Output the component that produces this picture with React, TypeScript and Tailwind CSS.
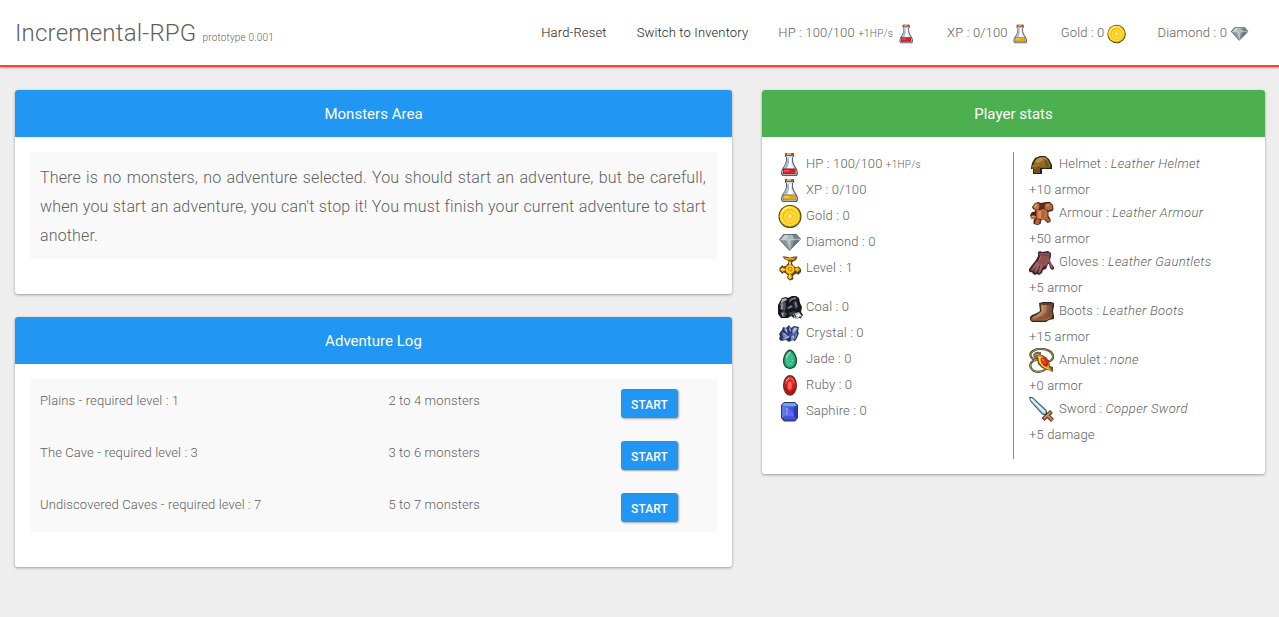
import type { ReactNode } from "react";

type IconProps = { className?: string };

function Svg({ className = "size-[25px]", children }: { className?: string; children: ReactNode }) {
  return (
    <svg viewBox="0 0 25 25" className={`${className} shrink-0`} aria-hidden="true">
      {children}
    </svg>
  );
}

function Flask({ className, dark, base, light }: IconProps & { dark: string; base: string; light: string }) {
  return (
    <Svg className={className}>
      <path d="M7 1h9v4h-1v4l1 3 1 2 2 3 1 3v2l-1 2H4.500L3 22v-2l1-3 2-3 1-2 1-3V5H7z" fill="#5f5f63" />
      <path d="M9 5h5v5l1 2.500 1.500 3 1.500 2 .7 3-1 2H5l-1-1.500.7-3 1.500-2.500 1.500-3L9 10z" fill="#dfe7f4" />
      <path d="M9.500 6h1.500v5l-2 6H6l2-4.500z" fill="#a5badf" />
      <path d="M11 6h2v6l1 4H9.500l1.500-4z" fill="#fff" />
      <path d="M5 16.500h12.500l.5 3v3H4.500v-3z" fill={dark} />
      <path d="M5.500 17.500H17v4H5.500z" fill={base} />
      <path d="M6 18h5v1.500H6z" fill={light} />
      <path d="M3.800 19.500l1.200-1v3.700h12.500v-3.700l1 1v2.500l-1 1H5z" fill="#b9bec8" />
      <path d="M8 1h7v3H8z" fill="#98592e" />
      <path d="M9 1h4v2H9z" fill="#e3ad6c" />
      <path d="M8 4h7v1H8z" fill="#cdd8eb" />
    </Svg>
  );
}

const HpFlask = (p: IconProps) => <Flask {...p} dark="#a3151b" base="#df2027" light="#fa5355" />;
const XpFlask = (p: IconProps) => <Flask {...p} dark="#a97f17" base="#dfae22" light="#f7ce4c" />;

function Coin({ className }: IconProps) {
  return (
    <Svg className={className}>
      <circle cx="12" cy="12.500" r="11.500" fill="#4e4216" />
      <circle cx="12" cy="12.500" r="10.500" fill="#deaa0a" />
      <circle cx="11.600" cy="12" r="9.900" fill="#ffe038" />
      <circle cx="12" cy="12.500" r="7.400" fill="#e8b715" />
      <circle cx="12.300" cy="12.800" r="6.700" fill="#ffd633" />
      <path d="M12 8.500l4 4-4 4-4-4z" fill="#f0c022" />
      <path d="M12 10l2.500 2.500L12 15l-2.500-2.500z" fill="#fff08a" />
      <path d="M4 8Q6.500 3.500 11.500 3.300" fill="none" stroke="#fff9b0" />
    </Svg>
  );
}

function Diamond({ className }: IconProps) {
  return (
    <Svg className={className}>
      <path d="M5.500 4h13l4.500 5-11.500 12L1 9.500z" fill="#616c6e" />
      <path d="M6.500 5h11.500l4 4.500-10 10.500L2.500 9.500z" fill="#98a6a8" />
      <path d="M6.500 5h4L8.500 9.500H3z" fill="#c9d1d2" />
      <path d="M10.500 5h4l2 4.500h-8z" fill="#adb9bb" />
      <path d="M14.500 5h3.500l3.500 4.500h-5z" fill="#758284" />
      <path d="M3 10h5.500l3 9z" fill="#8a999c" />
      <path d="M8.500 10h5l-1.500 10z" fill="#b5c1c2" />
      <path d="M13.500 10h3l-4.500 10z" fill="#849497" />
      <path d="M16.500 10h5.500l-9 9z" fill="#606f73" />
      <path d="M2.500 9.700h19.500" stroke="#d4dada" strokeWidth=".7" />
    </Svg>
  );
}

function LevelBadge() {
  return (
    <Svg>
      <path d="M4.500.5h3l4.500 1 4.500-1h3l-1.500 3.500-3 1.500-1 1 .5 2 2.500 2.500 2 .5 1-1.500 3 3v3l-3 3-1-1.500-2 .5-2.500 2.500 1 1-.5 2L12 24.500 9.500 22.500l-.5-2 1-1-2.500-2.500-2-.5-1 1.500-3-3v-3l3-3 1 1.500 2-.5 2.500-2.500.5-2-1-1-3-1.500z" fill="#5d3d12" />
      <path d="M6 1l3 1 3-.5 3 .5 3-1-2 2.500-4 1-4-1z" fill="#f3ab18" />
      <path d="M9.500 3.500h5l-1 1h-3z" fill="#a65d15" />
      <path d="M11 5.500h2v4h-2zM2 13.500L4.300 11.300l3 1.500v1.500L4.300 16zM22 13.500L19.700 11.300l-3 1.500v1.500l3 1.700zM12 23.500L9.800 21.500l1.200-3.500h2l1.200 3.500z" fill="#f5b31a" />
      <path d="M11.500 6h.8v3h-.8zM3 13.100h4v.8H3zM11.500 19h.8v3h-.8z" fill="#ffec71" />
      <circle cx="12" cy="13.500" r="4.800" fill="#cf870a" />
      <circle cx="12" cy="13.300" r="4" fill="#ffcb22" />
      <path d="M10.200 14.500v-3h3.600v3.500h-2v-1.500" fill="none" stroke="#c0780d" strokeWidth=".9" />
    </Svg>
  );
}

function Coal() {
  return (
    <Svg>
      <path d="M4 3l4-1 2 1 4-2h4l3 2 1 5 2 4-1 5 2 3-2 3h-7l-3-2-3 2H3l-3-4V10z" fill="#17171d" />
      <path d="M4 4l4-1 1 2-4 2-3 4z" fill="#b0b0be" />
      <path d="M3 9l4-3 1 4-1 6-4-2z" fill="#53535f" />
      <path d="M3 10l2-2-.5 7-2-1z" fill="#9797a6" />
      <path d="M3 17l3-1 3 3-2 3H4z" fill="#4c4c58" />
      <path d="M3.500 18l2-.5v4l-1.500-1z" fill="#a5a5b3" />
      <path d="M12 4l5-2 2 2-5 1-3 3z" fill="#777785" />
      <path d="M15 7l3-1 2 6-3 3z" fill="#3b3b46" />
      <path d="M18 6l1.500 5-1 2-2-5zM9 13l4-3 2 2-5 2z" fill="#7a7a89" />
      <path d="M10 18l6-2 3 2-6 3z" fill="#3c3c44" />
      <path d="M15 19l6-2 3 4-4 3h-3z" fill="#b5b5ba" />
      <path d="M18 20l3-1 2 1-3 2z" fill="#fff" />
      <path d="M16 19l2 3M21 22l2 1" stroke="#17171d" />
    </Svg>
  );
}

function Crystal() {
  return (
    <Svg>
      <path d="M5 6l3 1 3-3 2 3 3-2 5 1-1 5 1 1-2 5-2 3-3-1-3 2-3-2-5 1-2-2 1-3-1-2 2-3 1-1z" fill="#29345f" />
      <path d="M7 6l2 2 1 5-4-4zM11 5l2 3v4l-2-3zM14 9l2-3 4 1-3 6-3 1zM4 11l4 2 2 4-5-1zM4 18l5-4 3 2-5 3zM13 15l3-2 1 5-4 2zM17 14l2-3v3l-2 4z" fill="#7187c5" />
      <path d="M7 7l2 2v3zM11.500 6l1 3v2zM16 7l3 .3-4 5zM4.500 12l3 1 1.500 2zM6 18l4-3 1 1zM14 16l1.500-1.500.5 3z" fill="#bfcdf0" />
      <path d="M10 12l3 1 3-2-1 3-3 2z" fill="#465896" />
    </Svg>
  );
}

function Jade() {
  return (
    <Svg>
      <path d="M12 2.500c3.500 0 7 6 7 11.300 0 5-3 8.200-7 8.200s-7-3.200-7-8.200C5 8.500 8.500 2.500 12 2.500z" fill="#173f2e" />
      <path d="M12 3.700c2.800 0 5.800 5.400 5.800 10 0 4.400-2.400 7.100-5.800 7.100s-5.800-2.700-5.800-7.100c0-4.600 3-10 5.800-10z" fill="#20a36f" />
      <ellipse cx="11.800" cy="13" rx="4.600" ry="6.800" fill="#35bd87" />
      <path d="M8 9l3-4 2 .5-3 3.500-2 4z" fill="#8ee2bd" />
      <path d="M9 13h1v1H9zM13 10h1v1h-1zM12 16h2v1h-2zM10 17h1v1h-1zM14 13h1v1h-1z" fill="#64d5a4" />
    </Svg>
  );
}

function Ruby() {
  return (
    <Svg>
      <ellipse cx="12" cy="12.400" rx="7" ry="10.300" fill="#482927" />
      <ellipse cx="12" cy="12.400" rx="6" ry="9.300" fill="#c3211d" />
      <path d="M7 10c.8-4 2.500-6 5-6s4.200 2 5 6l-2 1-3-5-3 5z" fill="#ed493e" />
      <path d="M7 14l2 1 3 5 3-5 2-1c-.7 4-2.400 7-5 7s-4.300-3-5-7z" fill="#a91417" />
      <ellipse cx="12" cy="12.400" rx="3.600" ry="6.200" fill="#e7251f" />
      <ellipse cx="11.800" cy="12.400" rx="2" ry="4" fill="#ff6a5c" />
      <path d="M8 8l3-3" stroke="#ffaaa0" strokeWidth="1" />
    </Svg>
  );
}

function Saphire() {
  return (
    <Svg>
      <path d="M6 3h11l3 3v13l-3 3.500H6L3 19V6z" fill="#363857" />
      <path d="M6 4h11l2 2.500V19l-2 2.500H6L4 19V6.500z" fill="#3447c4" />
      <path d="M6 4h11l2 2.500-3 1H7l-3-1z" fill="#6fa3ee" />
      <path d="M4 7l3 1v9l-3 2z" fill="#5e7deb" />
      <path d="M16 8l3-1v12l-3-2z" fill="#293caf" />
      <path d="M7 8h9v9H7z" fill="#6068eb" />
      <path d="M10 8h6v7z" fill="#4650d9" />
      <path d="M8 9h1.500v7H8z" fill="#8b97fa" />
      <path d="M7 17h9l1 3H6z" fill="#4658d7" />
    </Svg>
  );
}

function Helmet() {
  return (
    <Svg>
      <path d="M2 16l1-5 3-5 5-2h5l4 3 3 6v4H13v5H4v-5H2z" fill="#2b210e" />
      <path d="M3.500 15l1-4 3-4 4-2h4l3 2 3 6v2H11z" fill="#916a2b" />
      <path d="M6 9l3-3 4-.5h3l2 2-4 1-6 3z" fill="#b98f45" />
      <path d="M14 6l4 3 2 6h-3l-1-5z" fill="#755120" />
      <path d="M3 14l8-1 1 2h9v1H11v5H5v-4H3z" fill="#79571f" />
      <path d="M3 13.500l7-1 1 1.500-7 1z" fill="#a57b35" />
      <path d="M6 17h4v3H6z" fill="#6d5023" />
    </Svg>
  );
}

function Armour() {
  return (
    <Svg>
      <path d="M3 6l3-4 3-1 3 1 5-1h4l3 3 .5 4-1 2-4 1v4l2 3v3l-3 1-3-3h-3l-1 4-3 1-4-1v-3l1-3H2l-1-3 2-3 3-.5V9L4 8z" fill="#4c2614" />
      <path d="M4 6l3-4 4 1-1 5-3 1z" fill="#c37648" />
      <path d="M15.500 3l5-1 2.500 2.500.5 3.500-4 1.500-4-2z" fill="#b9693d" />
      <path d="M10 3l4-.5 2 1-1 4-4 1z" fill="#54301d" />
      <path d="M7.500 9h3l4-1 3 1 1 2v6l-3 2-7-1-1-3z" fill="#bf6f43" />
      <path d="M9 10h3v7H9z" fill="#d58b5a" />
      <path d="M2 15l2-1 3 1 1 2-4 1H2zM7 18l4 1-1 4H7l-1-1zM16 17l2-1 3 3-1 2-2-.5z" fill="#b86639" />
      <path d="M5 5l2-2 1 1-2 3zM18 3l3 1-3 1zM3 15h2l1 1H3z" fill="#e8a370" />
      <path d="M14 10v7" stroke="#9b5530" strokeWidth=".9" />
    </Svg>
  );
}

function Gloves() {
  return (
    <Svg>
      <path d="M9 2l2-1 2 1 3-.5 3-.5 3 2v3l-1 4 1 3 3 4v2l-2 1-2-2-1-4h-1l-2 5-3 1-1 3-3 2-2-1-2 1-2-1-1-2-2 .5-1-1.500v-2l3-4 4-5 2-4z" fill="#402629" />
      <path d="M10 3l6 0 5 0-1 7-2 5-5 2-5-4 3-6z" fill="#935052" />
      <path d="M1.800 20L8 11l2 2-6 8zM5 21.500L9 13l2.500 1L7 23zM9 22.500l2.500-8 3 1L11 23zM18.500 9l1.500 0 4 8-1 2-2-3-2-5z" fill="#96575a" />
      <path d="M4 18l5-6M7 20l3-6M11 20l2-5M12 5l-2 6" stroke="#b07672" strokeWidth=".8" />
      <path d="M11 5h9" stroke="#69343a" fill="none" strokeWidth=".8" />
      <path d="M15 7l-2 6M18 7l-2 7" stroke="#875a43" strokeWidth=".7" />
    </Svg>
  );
}

function Boots() {
  return (
    <Svg>
      <path d="M10 4l4-1h8l3 1v3l-1 5 1 5v3l-5 1-3 2H3l-2-2v-3l2-2 5-2 3-2z" fill="#33251f" />
      <path d="M11.500 4.500H23.500L22.500 12l1 4-1 3-5 2.500H3L2 19.500l2-2 5-2 3-3z" fill="#8c583c" />
      <path d="M12 6h6l-1 7-4 4-8 3-2-1 2-2 5-1.500 2.500-3z" fill="#b57c52" />
      <path d="M12.500 7H15l-1 5-4 4-4 1 3-2 4-3z" fill="#c99465" />
      <path d="M20 6h3l-1 6 .5 4-5 3 2-6z" fill="#7a4b42" />
      <path d="M12 4h11l-1 2h-8z" fill="#60382d" />
      <path d="M2.500 21h13.500l5-2" fill="none" stroke="#9a6a4b" strokeWidth=".9" />
    </Svg>
  );
}

function Amulet() {
  return (
    <Svg>
      <g fill="none" strokeLinecap="round">
        <path d="M8 12C1 11-1 5 5 2.500 10-.5 20 1 23 5.500c3 4-1 9-5 7.500M11 5C6 4 3 8 8 10M8 12c-5 0-8 4-6 8 3 5 10 5 15 1" stroke="#473e24" strokeWidth="2.200" />
        <path d="M8 12C1 11-1 5 5 2.500 10-.5 20 1 23 5.500c3 4-1 9-5 7.500M11 5C6 4 3 8 8 10M8 12c-5 0-8 4-6 8 3 5 10 5 15 1" stroke="#b5a568" strokeWidth=".9" />
      </g>
      <path d="M7 7l4-1 6 3 3 4 1 5 3 1v5l-5-2-6-2-4-4-1-5z" fill="#7b4e16" />
      <path d="M8 8l3-1 5 3 3 4 1 5 3 4-5-2-5-3-3-4V10z" fill="#ef9b18" />
      <path d="M9 8l3 1-1 2 1 4 3 3 6 4-7-3-4-5z" fill="#ffd251" />
      <ellipse cx="15.500" cy="14" rx="2.800" ry="4.800" transform="rotate(-30 15.500 14)" fill="#ad2018" />
      <ellipse cx="15" cy="13.500" rx="1.800" ry="3.600" transform="rotate(-30 15 13.500)" fill="#f33927" />
      <path d="M13.500 11l1 2" stroke="#ff9c82" />
    </Svg>
  );
}

function Sword() {
  return (
    <Svg>
      <path d="M0 0h3.500L17.500 13l1 3.500-2.500 2-3-1L1 4z" fill="#40535c" />
      <path d="M1 1h2.200L16.800 13.800v3h-3L1.800 3.500z" fill="#9fd2e8" />
      <path d="M2 1.700l13.500 13.500" stroke="#f2feff" strokeWidth="1.300" />
      <path d="M14 22.500L22.500 14.500M18 18l5.500 5.500" stroke="#4d2e1c" strokeWidth="4" />
      <path d="M14.500 22L22 15M18.500 18.500l5 5" stroke="#c27a48" strokeWidth="2.200" />
      <path d="M15.500 20.500l5.500-5M20 19l2 2" stroke="#eeb583" strokeWidth=".8" />
    </Svg>
  );
}

const ADVENTURES = [
  { name: "Plains - required level : 1", monsters: "2 to 4 monsters" },
  { name: "The Cave - required level : 3", monsters: "3 to 6 monsters" },
  { name: "Undiscovered Caves - required level : 7", monsters: "5 to 7 monsters" },
];

const RESOURCES = [
  { icon: <Coal />, text: "Coal : 0" },
  { icon: <Crystal />, text: "Crystal : 0" },
  { icon: <Jade />, text: "Jade : 0" },
  { icon: <Ruby />, text: "Ruby : 0" },
  { icon: <Saphire />, text: "Saphire : 0" },
];

const EQUIPMENT = [
  { icon: <Helmet />, slot: "Helmet", item: "Leather Helmet", bonus: "+10 armor" },
  { icon: <Armour />, slot: "Armour", item: "Leather Armour", bonus: "+50 armor" },
  { icon: <Gloves />, slot: "Gloves", item: "Leather Gauntlets", bonus: "+5 armor" },
  { icon: <Boots />, slot: "Boots", item: "Leather Boots", bonus: "+15 armor" },
  { icon: <Amulet />, slot: "Amulet", item: "none", bonus: "+0 armor" },
  { icon: <Sword />, slot: "Sword", item: "Copper Sword", bonus: "+5 damage" },
];

function Panel({ title, tone, className, children }: { title: string; tone: string; className: string; children: ReactNode }) {
  return (
    <section className={`${className} shrink-0 overflow-hidden rounded-[3px] bg-white shadow-[0_1px_3px_rgba(0,0,0,0.35)]`}>
      <h2 className={`${tone} flex h-[47px] items-center justify-center text-[15px] font-normal tracking-[.02px] text-white`}>{title}</h2>
      <div className="p-[15px]">{children}</div>
    </section>
  );
}

function Stat({ icon, children }: { icon: ReactNode; children: ReactNode }) {
  return (
    <li className="flex h-[26px] gap-[3px] pl-px">
      {icon}
      <span className="leading-6">{children}</span>
    </li>
  );
}

const Regen = () => <small className="text-[10px] leading-none tracking-[.25px]">+1HP/s</small>;

export default function App() {
  return (
    <div className="min-h-screen bg-[#eee] font-['Roboto',sans-serif] text-[13px] font-light leading-6 tracking-[.15px] text-[#5f5f5f]">
      <header className="flex h-[67px] items-center justify-between border-b-2 border-[#ff4136] bg-white pl-[15px] pr-[14px] shadow-[0_1px_2px_rgba(0,0,0,0.3)]">
        <h1 className="whitespace-nowrap pt-px text-[24px] font-light leading-6 tracking-[.2px]">
          Incremental-RPG <small className="text-[10px] leading-none tracking-[.18px]">prototype 0.001</small>
        </h1>
        <nav className="flex items-center whitespace-nowrap">
          <a className="px-[15px] text-[#222]">Hard-Reset</a>
          <a className="px-[15px] text-[#222]">Switch to Inventory</a>
          <span className="flex gap-1 px-[15px]"><span>HP : 100/100 <Regen /></span><HpFlask className="mt-[3px] size-5" /></span>
          <span className="flex gap-[3px] px-[15px]">XP : 0/100 <XpFlask className="mt-[3px] size-5" /></span>
          <span className="flex gap-[3px] px-[15px]">Gold : 0 <Coin className="mt-[3px] size-5" /></span>
          <span className="flex gap-[3px] px-[15px]">Diamond : 0 <Diamond className="mt-[3px] size-5" /></span>
        </nav>
      </header>

      <main className="flex items-start gap-[30px] pl-[15px] pt-[23px]">
        <div className="flex w-[717px] shrink-0 flex-col gap-[23px]">
          <Panel title="Monsters Area" tone="bg-[#2196f3]" className="h-[204px]">
            <p className="h-[107px] bg-[#f9f9f9] pl-[10px] pr-[11px] pt-[11px] text-justify text-[16px] leading-[29px]">
              There is no monsters, no adventure selected. You should start an adventure, but be carefull, when you start an adventure, you can't stop it! You must finish your current adventure to start another.
            </p>
          </Panel>
          <Panel title="Adventure Log" tone="bg-[#2196f3]" className="h-[250px]">
            <div className="flex h-[153px] flex-col gap-[3px] bg-[#f9f9f9]">
              {ADVENTURES.map((a) => (
                <div key={a.name} className="grid h-[49px] grid-cols-[348.500px_232.500px_1fr] items-start pl-[10px] pt-[10px] tracking-[.12px]">
                  <span>{a.name}</span>
                  <span>{a.monsters}</span>
                  <button className="h-[29px] w-[57px] rounded-[3px] bg-[#2196f3] pt-[2px] text-xs font-medium tracking-[.1px] text-white shadow-[1px_1px_2px_rgba(0,0,0,0.35)]">START</button>
                </div>
              ))}
            </div>
          </Panel>
        </div>

        <Panel title="Player stats" tone="bg-[#4caf50]" className="h-[384px] w-[503px]">
          <div className="flex h-[307px]">
            <div className="flex w-[236px] flex-col gap-[13px]">
              <ul>
                <Stat icon={<HpFlask />}>HP : 100/100 <Regen /></Stat>
                <Stat icon={<XpFlask />}>XP : 0/100</Stat>
                <Stat icon={<Coin />}>Gold : 0</Stat>
                <Stat icon={<Diamond />}>Diamond : 0</Stat>
                <Stat icon={<LevelBadge />}>Level : 1</Stat>
              </ul>
              <ul>
                {RESOURCES.map((r) => (
                  <Stat key={r.text} icon={r.icon}>{r.text}</Stat>
                ))}
              </ul>
            </div>
            <ul className="flex-1 border-l border-[#4caf50] pl-[15px]">
              {EQUIPMENT.map((e) => (
                <li key={e.slot} className="h-[49px]">
                  <div className="flex h-[26px] gap-[5px]">
                    {e.icon}
                    <span>{e.slot} : <em className="tracking-[.33px]">{e.item}</em></span>
                  </div>
                  <div className="h-[23px]">{e.bonus}</div>
                </li>
              ))}
            </ul>
          </div>
        </Panel>
      </main>
    </div>
  );
}
